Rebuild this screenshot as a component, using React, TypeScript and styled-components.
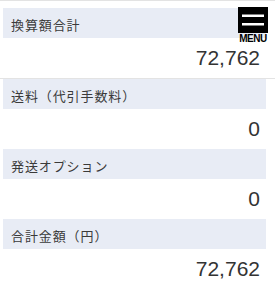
import React from 'react'
import styled, { createGlobalStyle } from 'styled-components'

const GlobalStyle = createGlobalStyle`
    html, body {
        margin     : 0;
        padding    : 0;
        background : #fff;
    }
    body {
        font-family : "Liberation Sans", "Noto Sans CJK JP", sans-serif;
        color       : #333;
    }
`

const rows = [
    { label: '換算額合計', value: '72,762' },
    { label: '送料（代引手数料）', value: '0' },
    { label: '発送オプション', value: '0' },
    { label: '合計金額（円）', value: '72,762' },
]

const App = () => {
    return (
        <>
            <GlobalStyle />
            <Page>
                {rows.map((row, i) => (
                    <Section key={i} $first={i === 0}>
                        <Label>{row.label}</Label>
                        <Value>{row.value}</Value>
                    </Section>
                ))}
            </Page>
            <MenuButton>
                <svg width="30" height="26" viewBox="0 0 30 26">
                    <rect x="0" y="0" width="30" height="26" fill="#000" />
                    <rect x="4" y="7.5" width="22" height="2.5" fill="#fff" />
                    <rect x="4" y="16" width="22" height="2.5" fill="#fff" />
                </svg>
                <span>MENU</span>
            </MenuButton>
        </>
    )
}

export default App

const Page = styled.div`
    display        : flex;
    flex-direction : column;
    width          : 275px;
`

const Section = styled.div<{ $first?: boolean }>`
    display        : flex;
    flex-direction : column;
    border-top     : ${p => (p.$first ? '1px solid #e3e3e3' : '0')};
    border-bottom  : ${p => (p.$first ? '1px solid #e3e3e3' : '0')};
    padding-top    : ${p => (p.$first ? '7px' : '0')};
`

const Label = styled.div`
    display          : flex;
    align-items      : center;
    height           : 30px;
    margin           : 0 9px 0 3px;
    padding          : 3px 0 0 8px;
    box-sizing       : border-box;
    background-color : #e8ecf5;
    font-family      : "Noto Sans CJK JP", sans-serif;
    font-size        : 13px;
    letter-spacing   : 0.9px;
    color            : #3a3a3a;
`

const Value = styled.div`
    display         : flex;
    align-items     : center;
    justify-content : flex-end;
    height          : 40px;
    padding-right   : 15px;
    font-size       : 21px;
    color           : #333;
`

const MenuButton = styled.div`
    position        : absolute;
    top             : 7px;
    left            : 238px;
    display         : flex;
    flex-direction  : column;
    align-items     : center;
    width           : 30px;

    svg {
        display : block;
    }

    span {
        margin-top     : 1px;
        font-family    : "Liberation Sans", sans-serif;
        font-weight    : bold;
        font-size      : 10px;
        line-height    : 10px;
        letter-spacing : -0.5px;
        color          : #000;
    }
`
